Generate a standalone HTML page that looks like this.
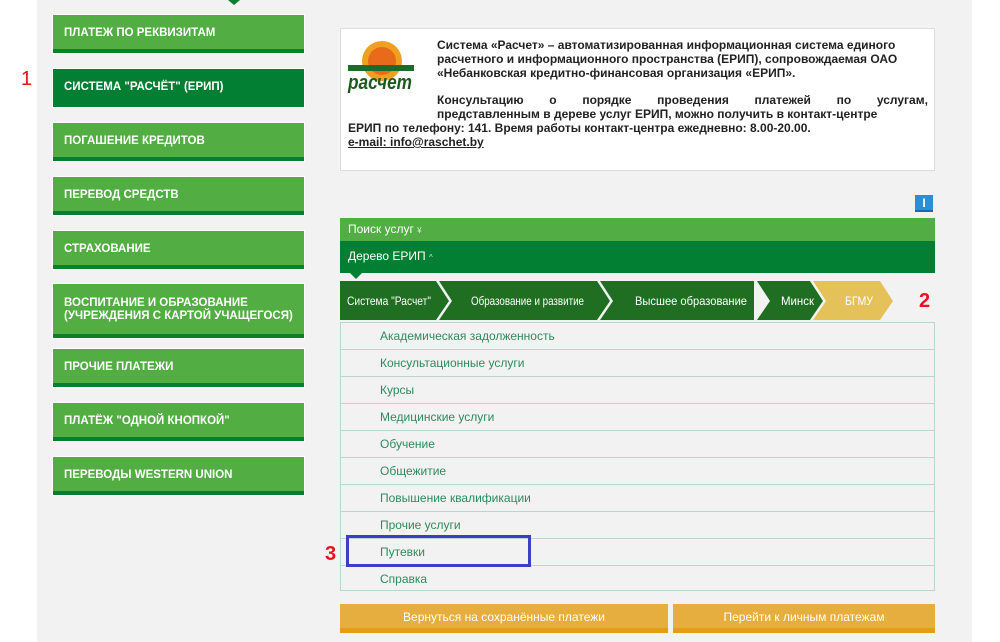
<!DOCTYPE html>
<html><head><meta charset="utf-8"><style>
*{margin:0;padding:0;box-sizing:border-box}
body{width:1000px;height:642px;background:#fff;position:relative;overflow:hidden;font-family:"Liberation Sans",Tahoma,sans-serif}
.panel{position:absolute;left:37px;top:0;width:935px;height:642px;background:#f2f2f2}
.btn{position:absolute;left:53px;width:251px;height:38px;background:#52ad43;border-bottom:4px solid #067f2e;color:#fff;font-weight:bold;font-size:11.5px;padding-left:11px;padding-top:2px;display:flex;align-items:center;line-height:13px;outline:1px solid #fff}
.btn.dk{background:#037f33;border-bottom-color:#037f33}
.abs{position:absolute}
.info{position:absolute;left:340px;top:28px;width:595px;height:143px;background:#fff;border:1px solid #ddd}
.t{position:absolute;font-size:12px;font-weight:bold;color:#222;white-space:nowrap;line-height:14px}
.list{position:absolute;left:340px;top:322px;width:595px;height:269px;border:1px solid #b9d8cb}
.row{height:27px;border-bottom:1px solid #b9d8cb;color:#2f8a5d;font-size:12px;padding-left:39px;line-height:27px}
.row:last-child{border-bottom:none}
.red{position:absolute;color:#e8141c;font-size:20px}
.yb{position:absolute;top:604px;height:29px;background:#e5ae3e;border-bottom:5px solid #e39e15;color:#fff;font-size:12px;text-align:center;line-height:26px}
</style></head><body>
<div class="panel"></div>
<div class="abs" style="left:228px;top:0;width:0;height:0;border-left:6px solid transparent;border-right:6px solid transparent;border-top:5px solid #067f2e"></div>
<div class="btn" style="top:15px">ПЛАТЕЖ ПО РЕКВИЗИТАМ</div>
<div class="btn dk" style="top:69px">СИСТЕМА "РАСЧЁТ" (ЕРИП)</div>
<div class="btn" style="top:123px">ПОГАШЕНИЕ КРЕДИТОВ</div>
<div class="btn" style="top:177px">ПЕРЕВОД СРЕДСТВ</div>
<div class="btn" style="top:231px">СТРАХОВАНИЕ</div>
<div class="btn" style="top:284px;height:54px">ВОСПИТАНИЕ И ОБРАЗОВАНИЕ<br>(УЧРЕЖДЕНИЯ С КАРТОЙ УЧАЩЕГОСЯ)</div>
<div class="btn" style="top:349px">ПРОЧИЕ ПЛАТЕЖИ</div>
<div class="btn" style="top:403px">ПЛАТЁЖ "ОДНОЙ КНОПКОЙ"</div>
<div class="btn" style="top:457px">ПЕРЕВОДЫ WESTERN UNION</div>
<div class="red" style="left:21px;top:68px">1</div>

<div class="info">
<svg class="abs" style="left:5px;top:6px" width="70" height="60" viewBox="0 0 70 60">
<circle cx="36" cy="26" r="20" fill="#f0a020"/><circle cx="36" cy="26" r="14" fill="#e86a1a"/>
<rect x="2" y="30" width="66" height="6" fill="#1d6b2a"/>
<text x="2" y="54" font-family="Liberation Sans" font-weight="bold" font-style="italic" font-size="20" textLength="64" lengthAdjust="spacingAndGlyphs" fill="#1d5a20">расчет</text>
</svg>
<div class="t" style="left:96px;top:9px">Система «Расчет» – автоматизированная информационная система единого</div>
<div class="t" style="left:96px;top:23px">расчетного и информационного пространства (ЕРИП), сопровождаемая ОАО</div>
<div class="t" style="left:96px;top:37px">«Небанковская кредитно-финансовая организация «ЕРИП».</div>
<div class="t" style="left:96px;top:64px;width:491px;display:flex;justify-content:space-between"><span>Консультацию</span><span>о</span><span>порядке</span><span>проведения</span><span>платежей</span><span>по</span><span>услугам,</span></div>
<div class="t" style="left:96px;top:78px">представленным в дереве услуг ЕРИП, можно получить в контакт-центре</div>
<div class="t" style="left:7px;top:92px">ЕРИП по телефону: 141. Время работы контакт-центра ежедневно: 8.00-20.00.</div>
<div class="t" style="left:7px;top:106px;text-decoration:underline">e-mail: info@raschet.by</div>
</div>

<div class="abs" style="left:915px;top:195px;width:18px;height:17px;background:#2a8fd6;color:#fff;font-weight:bold;font-size:12px;text-align:center;line-height:17px;border-bottom:2px solid #1a6aa8">I</div>
<div class="abs" style="left:340px;top:218px;width:595px;height:23px;background:#52ae44;color:#fff;font-size:12px;padding-left:8px;line-height:22px">Поиск услуг <span style="font-size:8px;opacity:.8">¥</span></div>
<div class="abs" style="left:340px;top:241px;width:595px;height:32px;background:#037f33;color:#fff;font-size:12px;padding-left:8px;line-height:30px">Дерево ЕРИП <span style="font-size:8px;opacity:.8">^</span></div>
<div class="abs" style="left:350px;top:273px;width:0;height:0;border-left:6px solid transparent;border-right:6px solid transparent;border-top:6px solid #037f33"></div>

<svg class="abs" style="left:340px;top:281px" width="560" height="40">
<polygon points="0,0 96,0 109,20 96,39 0,39" fill="#1f6e22"/>
<polygon points="99,0 257,0 270,20 257,39 99,39 112,20" fill="#1f6e22"/>
<polygon points="260,0 414,0 414,39 260,39 273,20" fill="#1f6e22"/>
<polygon points="417,0 470,0 483,20 470,39 417,39 430,20" fill="#1f6e22"/>
<polygon points="473,0 540,0 553,20 540,39 473,39 486,20" fill="#e5c15a"/>
<g font-family="Liberation Sans" font-size="12" fill="#fff">
<text x="7" y="24" textLength="84" lengthAdjust="spacingAndGlyphs">Система "Расчет"</text>
<text x="131" y="24" textLength="113" lengthAdjust="spacingAndGlyphs">Образование и развитие</text>
<text x="295" y="24" textLength="112" lengthAdjust="spacingAndGlyphs">Высшее образование</text>
<text x="441" y="24" textLength="33" lengthAdjust="spacingAndGlyphs">Минск</text>
<text x="505" y="24" textLength="28" lengthAdjust="spacingAndGlyphs">БГМУ</text>
</g></svg>
<div class="red" style="left:919px;top:290px;font-weight:bold">2</div>

<div class="list">
<div class="row">Академическая задолженность</div>
<div class="row">Консультационные услуги</div>
<div class="row">Курсы</div>
<div class="row">Медицинские услуги</div>
<div class="row">Обучение</div>
<div class="row">Общежитие</div>
<div class="row">Повышение квалификации</div>
<div class="row">Прочие услуги</div>
<div class="row">Путевки</div>
<div class="row">Справка</div>
</div>
<div class="abs" style="left:346px;top:535px;width:185px;height:32px;border:3px solid #3a3fc5"></div>
<div class="red" style="left:325px;top:543px;font-weight:bold">3</div>

<div class="yb" style="left:340px;width:328px">Вернуться на сохранённые платежи</div>
<div class="yb" style="left:673px;width:262px">Перейти к личным платежам</div>
</body></html>
